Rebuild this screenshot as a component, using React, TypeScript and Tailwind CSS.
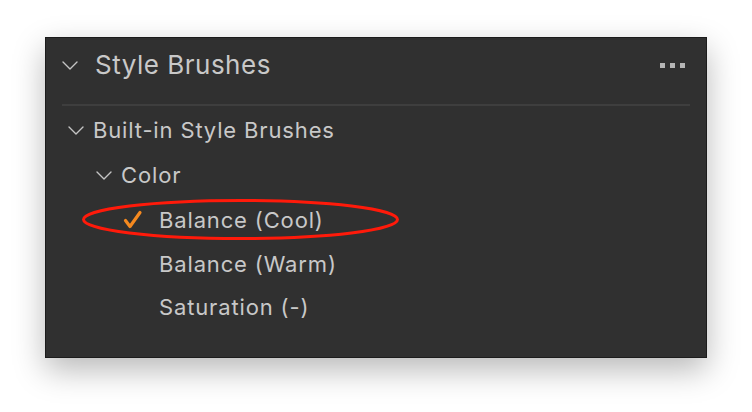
import React from "react";

const Chevron = () => (
  <svg width="16" height="9" viewBox="0 0 16 9">
    <path d="M1 1 L8 8 L15 1" fill="none" stroke="#c4c4c4" strokeWidth="1.4" strokeLinecap="round" strokeLinejoin="round" />
  </svg>
);

const Check = () => (
  <svg width="20" height="20" viewBox="0 0 20 20">
    <path d="M2.5 10.5 L7 16.5 L17 2.5" fill="none" stroke="#f5891f" strokeWidth="3.2" strokeLinecap="round" strokeLinejoin="round" />
  </svg>
);

export default function App() {
  const font = { fontFamily: "Inter, 'Noto Sans', sans-serif" };
  return (
    <div className="w-[752px] h-[412px] bg-white overflow-hidden relative" style={font}>
      <div className="ml-[45px] mt-[37px] w-[662px] h-[321px] bg-[#303030] border border-[#1c1c1c] overflow-hidden shadow-[0_12px_30px_rgba(0,0,0,0.28)] text-[#c8c8c8]">
        <div className="h-[66px] flex items-center pl-[16px] pr-[21px] pb-[12px]">
          <Chevron />
          <span className="ml-[17px] text-[26px] tracking-[0.5px] leading-none">Style Brushes</span>
          <div className="ml-auto flex gap-[5px]">
            <div className="w-[5px] h-[5px] bg-[#b6b6b6]" />
            <div className="w-[5px] h-[5px] bg-[#b6b6b6]" />
            <div className="w-[5px] h-[5px] bg-[#b6b6b6]" />
          </div>
        </div>
        <div className="mx-[16px] h-[2px] bg-[#3e3e3e]" />
        <div className="pt-[2px] text-[22px] tracking-[0.85px] h-[236px] overflow-hidden">
          <div className="h-[45px] flex items-center pl-[22px]">
            <Chevron />
            <span className="ml-[9px]">Built-in Style Brushes</span>
          </div>
          <div className="h-[45px] flex items-center pl-[50px]">
            <Chevron />
            <span className="ml-[9px]">Color</span>
          </div>
          <div className="h-[44px] flex items-center pl-[77px]">
            <Check />
            <span className="ml-[16px]">Balance (Cool)</span>
          </div>
          <div className="h-[44px] flex items-center pl-[113px]">
            <span>Balance (Warm)</span>
          </div>
          <div className="h-[43px] flex items-center pl-[113px]">
            <span>Saturation (-)</span>
          </div>
          <div className="h-[44px] flex items-center pl-[113px]">
            <span>Saturation (+)</span>
          </div>
        </div>
      </div>
      <svg className="absolute left-0 top-0 pointer-events-none" width="752" height="412">
        <ellipse cx="240.5" cy="219.5" rx="157" ry="19" fill="none" stroke="#ff1a0a" strokeWidth="3" />
      </svg>
    </div>
  );
}
